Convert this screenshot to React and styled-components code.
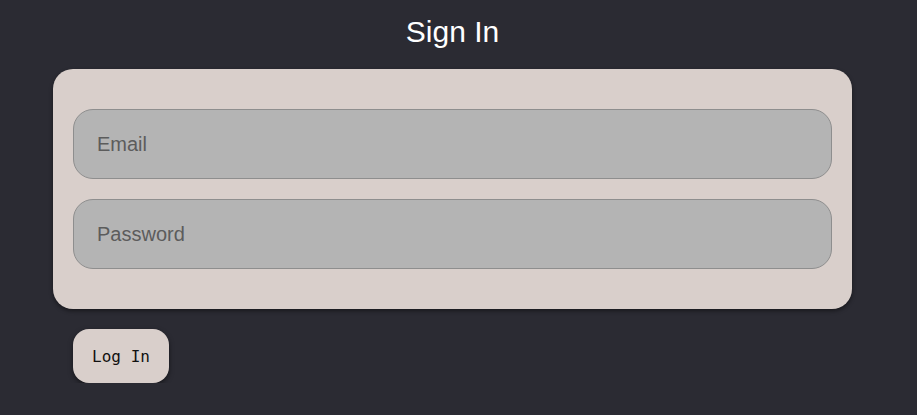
import React, { useState } from "react";
import styled, { createGlobalStyle } from "styled-components";

const GlobalStyle = createGlobalStyle`
  html, body {
    margin: 0;
    padding: 0;
    background: #2b2b33;
  }
  body {
    font-family: "Liberation Sans", Arial, sans-serif;
  }
`;

const Page = styled.div`
  display: flex;
  flex-direction: column;
  padding: 14px 0 0 53px;
  width: 799px;
`;

const Title = styled.h1`
  margin: 0 0 19px;
  font-size: 30px;
  line-height: 36px;
  font-weight: 400;
  color: #ffffff;
  text-align: center;
`;

const Card = styled.form`
  display: flex;
  flex-direction: column;
  gap: 20px;
  padding: 40px 20px;
  background: #d9cfcb;
  border-radius: 20px;
  box-shadow: 0 2px 4px rgba(0, 0, 0, 0.45);
`;

const Input = styled.input`
  box-sizing: border-box;
  height: 70px;
  width: 100%;
  padding: 0 23px;
  background: #b4b4b4;
  border: 1px solid #8e8e8e;
  border-radius: 20px;
  font-family: "Liberation Sans", Arial, sans-serif;
  font-size: 20px;
  color: #222;
  outline: none;

  &::placeholder {
    color: #5c5c5c;
  }
`;

const Actions = styled.div`
  display: flex;
  padding: 20px 20px 0;
`;

const Button = styled.button`
  height: 54px;
  width: 96px;
  padding: 0;
  border: none;
  border-radius: 16px;
  background: #d9cfcb;
  color: #111;
  font-family: "DejaVu Sans Mono", monospace;
  font-size: 16px;
  cursor: pointer;
  box-shadow: 0 2px 5px rgba(0, 0, 0, 0.5);
`;

export default function App() {
  const [email, setEmail] = useState("");
  const [password, setPassword] = useState("");

  return (
    <>
      <GlobalStyle />
      <Page>
        <Title>Sign In</Title>
        <Card onSubmit={(e) => e.preventDefault()}>
          <Input
            type="email"
            placeholder="Email"
            value={email}
            onChange={(e) => setEmail(e.target.value)}
          />
          <Input
            type="password"
            placeholder="Password"
            value={password}
            onChange={(e) => setPassword(e.target.value)}
          />
        </Card>
        <Actions>
          <Button type="button">Log In</Button>
        </Actions>
      </Page>
    </>
  );
}
